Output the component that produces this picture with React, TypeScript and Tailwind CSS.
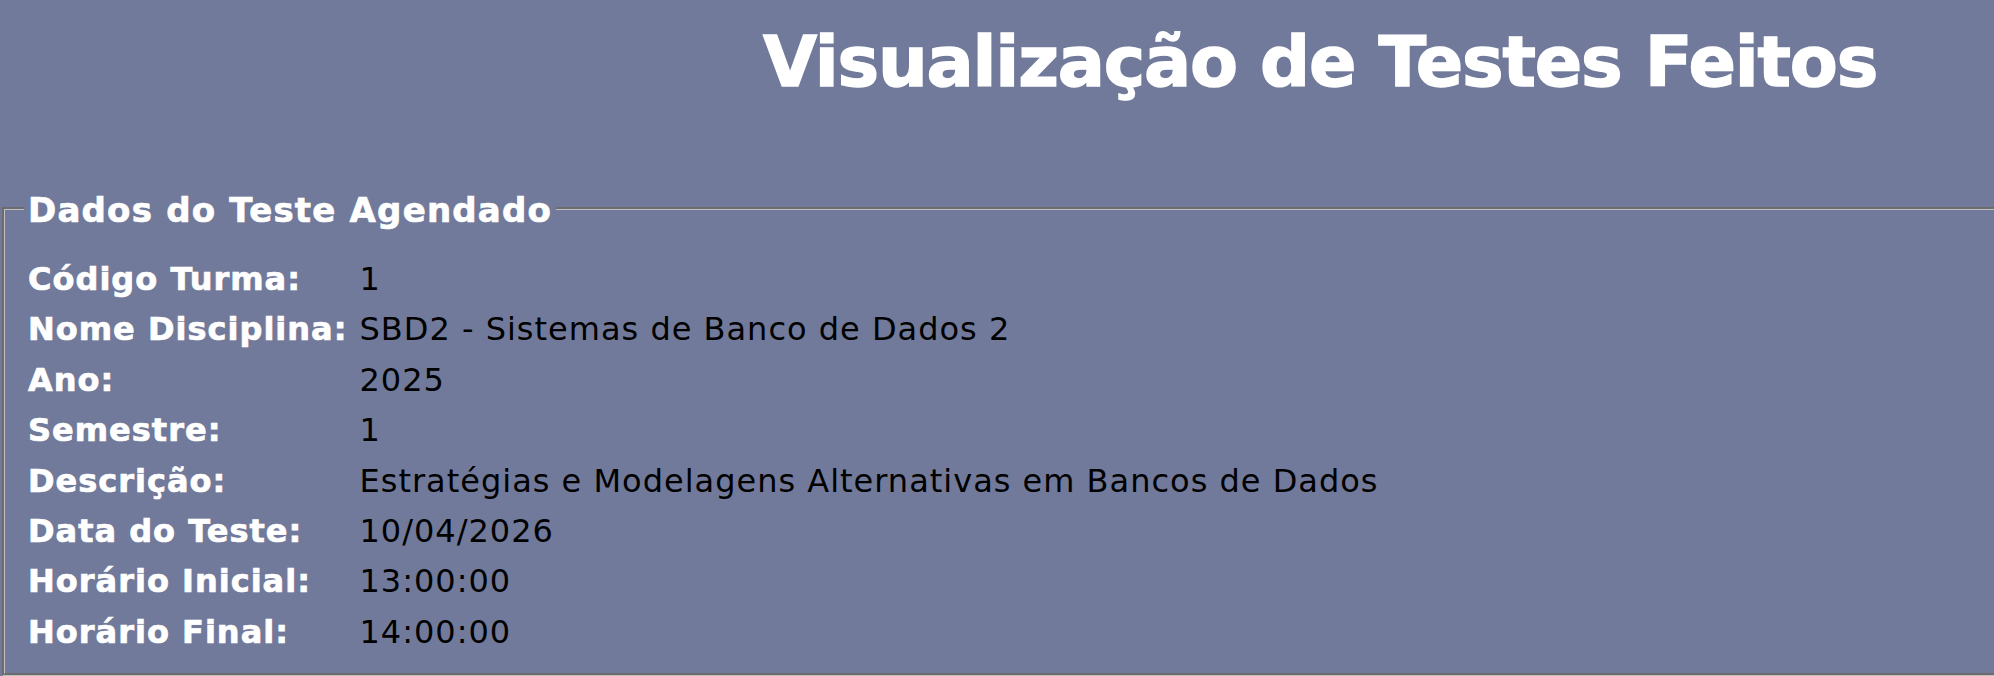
import React from "react";

const rows: [string, string][] = [
  ["Código Turma:", "1"],
  ["Nome Disciplina:", "SBD2 - Sistemas de Banco de Dados 2"],
  ["Ano:", "2025"],
  ["Semestre:", "1"],
  ["Descrição:", "Estratégias e Modelagens Alternativas em Bancos de Dados"],
  ["Data do Teste:", "10/04/2026"],
  ["Horário Inicial:", "13:00:00"],
  ["Horário Final:", "14:00:00"],
];

export default function App() {
  return (
    <div className="w-[1994px] h-[676px] overflow-hidden bg-[#717a9a] font-['DejaVu_Sans',Verdana,sans-serif]">
      <div className="w-[2640px]">
        <h1 className="pt-[22px] text-center text-[70px] leading-[80px] font-bold tracking-[-1.2px] text-white [-webkit-text-stroke:1.4px_white]">
          Visualização de Testes Feitos
        </h1>
        <fieldset className="mt-[79px] mx-[2px] border-[3px] [border-style:groove] border-[#c0c0c0] pl-[19px] pt-[18px] pb-[16px]">
          <legend className="px-[4px] pt-[4px] text-[34px] font-bold tracking-[1.2px] text-white [-webkit-text-stroke:0.7px_white]">
            Dados do Teste Agendado
          </legend>
          <table className="border-collapse text-[32px] leading-[50.4px]">
            <tbody>
              {rows.map(([k, v]) => (
                <tr key={k}>
                  <td className="pl-[4px] pr-[12px] font-bold tracking-[1px] text-white whitespace-nowrap [-webkit-text-stroke:0.7px_white]">
                    {k}
                  </td>
                  <td className="pl-0 text-black tracking-[1px] whitespace-nowrap">{v}</td>
                </tr>
              ))}
            </tbody>
          </table>
        </fieldset>
      </div>
    </div>
  );
}
